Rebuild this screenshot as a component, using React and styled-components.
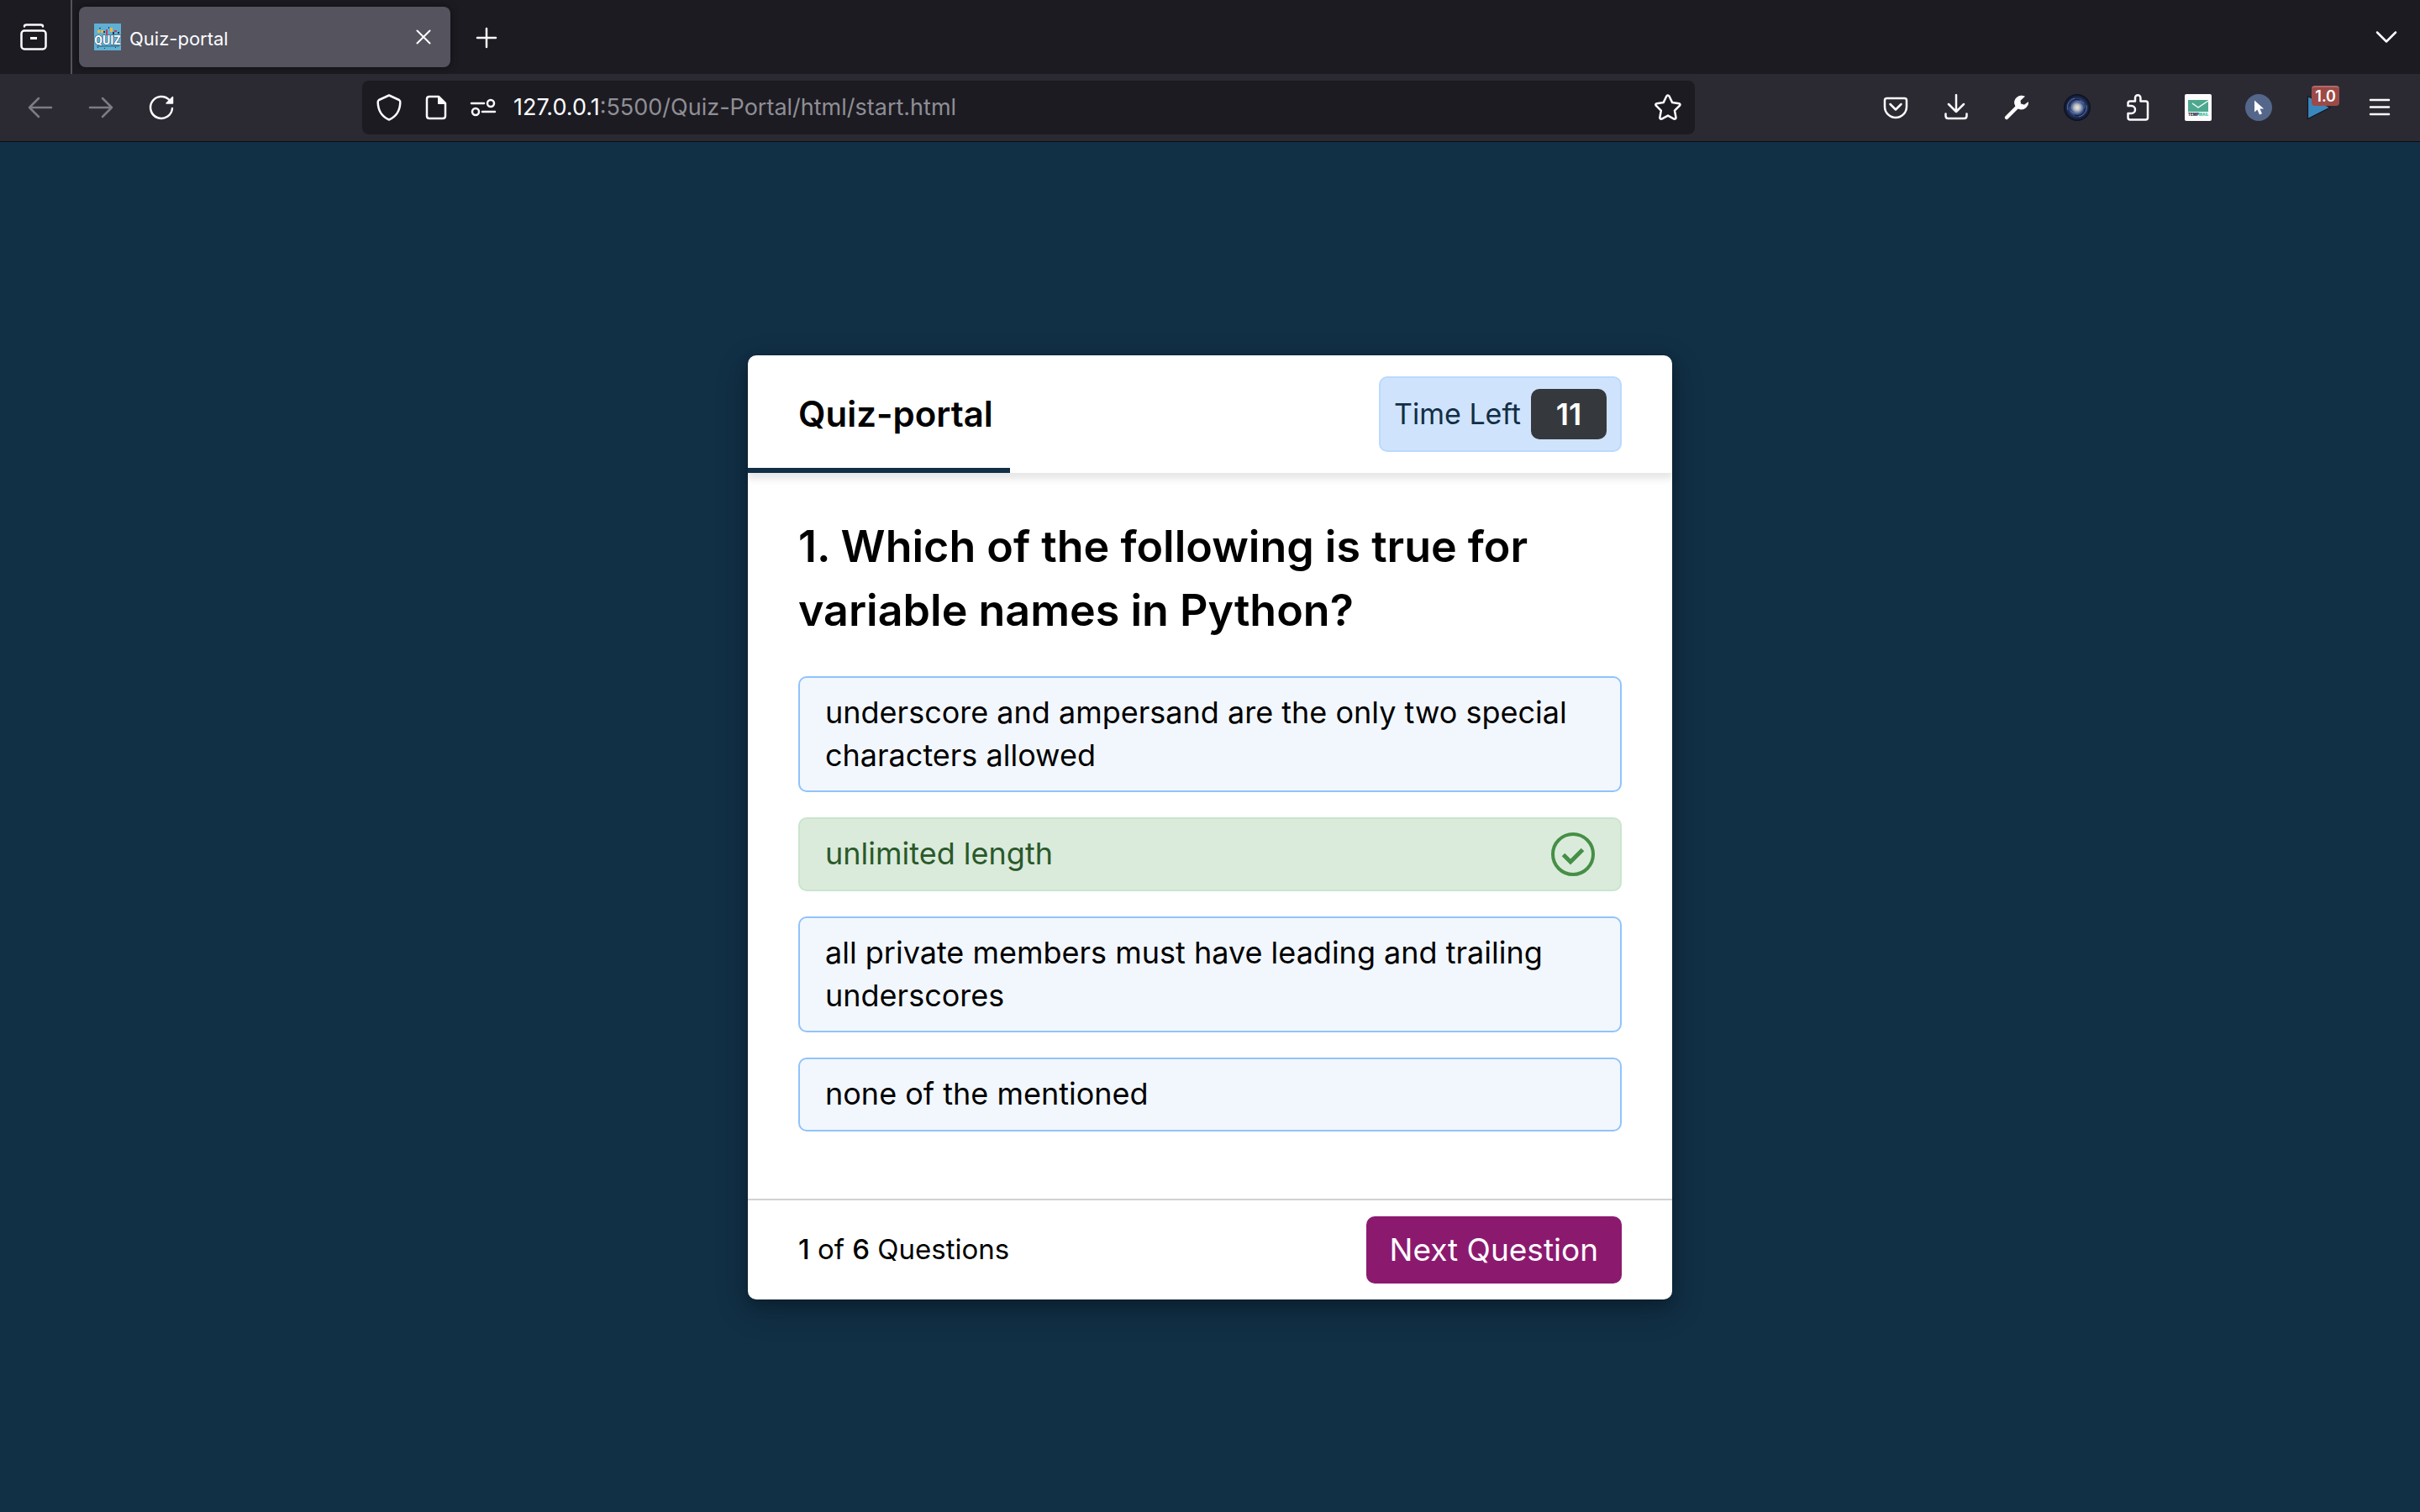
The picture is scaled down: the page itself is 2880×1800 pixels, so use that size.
import React, { useState } from "react";
import styled, { createGlobalStyle, css } from "styled-components";

const uiFont = `Inter, "Liberation Sans", sans-serif`;
const quizFont = `Inter, "Open Sans", sans-serif`;

const GlobalStyle = createGlobalStyle`
  * { box-sizing: border-box; }
  html, body { margin: 0; padding: 0; }
  body { background: #112f45; color: #000; font-family: ${quizFont}; }
  button, input { font: inherit; color: inherit; margin: 0; border: 0; padding: 0; background: none; }
  button { cursor: pointer; }
  svg { display: block; flex: none; }
`;

const Window = styled.div`
  display: flex;
  flex-direction: column;
  min-height: 100vh;
`;

const TabStrip = styled.header`
  display: flex;
  align-items: center;
  height: 88px;
  background: #1c1b22;
  color: #fbfbfe;
  font-family: ${uiFont};
`;

const RecentButton = styled.button`
  display: flex;
  align-items: center;
  justify-content: center;
  align-self: stretch;
  width: 86px;
  padding-right: 4px;
  border-right: 2px solid #54535e;
`;

const Tab = styled.div`
  display: flex;
  align-items: center;
  gap: 10px;
  width: 442px;
  height: 72px;
  margin: 0 8px;
  padding: 0 16px 0 18px;
  border-radius: 8px;
  background: #54535e;
  box-shadow: 0 0 8px rgba(0, 0, 0, 0.5);
`;

const TabTitle = styled.span`
  flex: 1;
  padding-top: 4px;
  font-size: 22px;
  line-height: 32px;
`;

const StripButton = styled.button`
  display: flex;
  align-items: center;
  justify-content: center;
  width: ${(p) => p.$size}px;
  height: ${(p) => p.$size}px;
`;

const StripSpacer = styled.div`
  flex: 1;
`;

const ListTabs = styled(StripButton)`
  margin-right: 4px;
`;

const Toolbar = styled.nav`
  display: flex;
  align-items: center;
  height: 81px;
  padding: 0 12px;
  background: #2b2a33;
  border-bottom: 1px solid #0c0c0d;
  color: #fbfbfe;
  font-family: ${uiFont};
`;

const ToolButton = styled.button`
  position: relative;
  display: flex;
  align-items: center;
  justify-content: center;
  width: 72px;
  height: 64px;
  color: ${(p) => (p.$dim ? "#7d7c82" : "#fbfbfe")};
`;

const Badge = styled.span`
  position: absolute;
  top: 6px;
  right: 12px;
  padding: 0 4px;
  border-radius: 4px;
  border-top: 2px solid #b36a68;
  background: #9c4a48;
  color: #fff;
  font-size: 18px;
  font-weight: 600;
  line-height: 22px;
`;

const AddressBar = styled.div`
  display: flex;
  align-items: center;
  flex: 1;
  height: 64px;
  margin: 0 203px;
  border-radius: 8px;
  padding: 0 4px;
  background: #1c1b22;
  font-size: 27px;
  line-height: 40px;
`;

const AddressButton = styled.button`
  display: flex;
  align-items: center;
  justify-content: center;
  width: 56px;
  height: 56px;
`;

const Host = styled.label`
  padding-left: 8px;
`;

const Path = styled.input`
  flex: 1;
  min-width: 0;
  color: #8f8e94;
  outline: none;
`;

const Page = styled.main`
  display: flex;
  flex: 1;
  align-items: center;
  justify-content: center;
  padding: 40px;
`;

const Card = styled.section`
  width: 1100px;
  max-width: 100%;
  border-radius: 10px;
  background: #fff;
  box-shadow: 0 8px 16px rgba(0, 0, 0, 0.2), 0 12px 40px rgba(0, 0, 0, 0.19);
`;

const CardHeader = styled.header`
  position: relative;
  display: flex;
  align-items: center;
  justify-content: space-between;
  height: 140px;
  padding: 0 60px;
  border-radius: 10px 10px 0 0;
  box-shadow: 0 6px 10px 1px rgba(0, 0, 0, 0.1);
`;

const Title = styled.h1`
  margin: 0;
  font-size: 42px;
  font-weight: 600;
  line-height: 60px;
`;

const Timer = styled.div`
  display: flex;
  align-items: center;
  gap: 12px;
  height: 90px;
  padding: 0 16px;
  border: 2px solid #bbd9fd;
  border-radius: 10px;
  background: #d0e3fd;
`;

const TimerLabel = styled.span`
  color: #112f45;
  font-size: 34px;
  line-height: 51px;
`;

const TimerValue = styled.output`
  width: 90px;
  border-radius: 10px;
  background: #35393d;
  color: #fff;
  font-size: 36px;
  font-weight: 600;
  line-height: 60px;
  text-align: center;
`;

const TimeLine = styled.div`
  position: absolute;
  left: 0;
  bottom: 0;
  height: 6px;
  background: #112f45;
`;

const Body = styled.div`
  padding: 50px 60px 80px;
`;

const Question = styled.h2`
  margin: 0 0 40px;
  font-size: 52px;
  font-weight: 600;
  line-height: 76px;
`;

const OptionList = styled.div`
  display: flex;
  flex-direction: column;
  gap: 30px;
`;

const Option = styled.button`
  display: flex;
  align-items: center;
  justify-content: space-between;
  gap: 16px;
  min-height: 88px;
  padding: 16px 30px;
  border: 2px solid #91c3fb;
  border-radius: 10px;
  background: #f2f7fe;
  font-size: 36px;
  line-height: 51px;
  text-align: left;
  ${(p) =>
    p.$correct &&
    css`
      border-color: #c9e5cd;
      background: #daebdb;
      color: #2a592a;
    `}
`;

const CardFooter = styled.footer`
  display: flex;
  align-items: center;
  justify-content: space-between;
  height: 120px;
  padding: 0 60px;
  border-top: 2px solid #d1d1d1;
`;

const Progress = styled.p`
  margin: 0;
  font-size: 33px;
  line-height: 51px;
  strong { font-weight: 500; }
`;

const NextButton = styled.button`
  height: 80px;
  padding: 0 28px;
  border-radius: 10px;
  background: #8b1a6f;
  color: #fff;
  font-size: 37px;
  line-height: 54px;
`;

const Icon = ({ size = 32, w = 2, children }) => (
  <svg width={size} height={size} viewBox="0 0 32 32" fill="none" stroke="currentColor" strokeWidth={w} strokeLinecap="round" strokeLinejoin="round" aria-hidden="true">
    {children}
  </svg>
);

const Favicon = () => (
  <svg width="32" height="32" viewBox="0 0 32 32" aria-hidden="true">
    <rect width="32" height="32" fill="#5fb0d3" />
    <path d="M4 8h3v3h-3zM8 8h3v3h-3zM19 5h3v5h-3z" fill="#f0b73c" />
    <path d="M14 7h2v7h-2zM24 8h3v2h-3zM28 14h3v4h-3z" fill="#c23a5e" />
    <path d="M6 5h2v1h-2zM17 4h1v2h-1zM22 10h2v3h-2zM11 9h2v2h-2zM28 10h2v2h-2zM1 20h2v2h-2zM4 28h1v1h-1zM25 28h1v1h-1zM12 29h1v1h-1z" fill="#1d3a52" />
    <text x="16" y="25" textAnchor="middle" fontFamily="Roboto, sans-serif" fontWeight="700" fontSize="14" fill="#fff" stroke="#26465e" strokeWidth="1" paintOrder="stroke">QUIZ</text>
    <path d="M3 27h27" stroke="#2c5f7c" strokeWidth="1" />
  </svg>
);

const Galaxy = () => (
  <svg width="32" height="32" viewBox="0 0 32 32" aria-hidden="true">
    <defs>
      <radialGradient id="core">
        <stop offset="0" stopColor="#f0e8da" />
        <stop offset="0.25" stopColor="#b4b6be" />
        <stop offset="0.45" stopColor="#44598a" />
        <stop offset="0.75" stopColor="#1c2a52" />
        <stop offset="1" stopColor="#0a0d18" />
      </radialGradient>
    </defs>
    <circle cx="16" cy="16" r="16" fill="url(#core)" />
    <g fill="none" stroke="#6f8fc9" strokeWidth="1" opacity="0.6">
      <path d="M16 11c6 0 8 5 5 9s-10 4-13 0M16 21c-6 0-8-5-5-9s9-5 13-1M5 19c-2-6 1-12 8-14M27 13c2 6-2 12-9 14" />
    </g>
    <g fill="none" stroke="#080b18" strokeWidth="1" opacity="0.7">
      <path d="M7 15c0-6 6-10 12-8M25 17c0 6-6 10-12 8" />
    </g>
  </svg>
);

const TempMail = () => (
  <svg width="32" height="32" viewBox="0 0 32 32" aria-hidden="true">
    <rect width="32" height="32" rx="2" fill="#fcfcfc" />
    <rect x="4" y="7" width="24" height="14" fill="#4ea890" />
    <path d="M9 11l7 5 12-8" fill="none" stroke="#fff" strokeWidth="1.4" />
    <text x="4" y="26" fontFamily="Inter, sans-serif" fontWeight="900" fontSize="4.4" fill="#26334d">TEMP<tspan fill="#4ec3a0">MAIL</tspan></text>
  </svg>
);

const Pointer = () => (
  <svg width="32" height="32" viewBox="0 0 32 32" aria-hidden="true">
    <circle cx="16" cy="16" r="16" fill="#54678a" />
    <path d="M11 7.500v14l3.400-3 2.600 6 3-1.300-2.600-5.700h4.700z" fill="#fff" />
  </svg>
);

const Play = () => (
  <svg width="32" height="32" viewBox="0 0 32 32" aria-hidden="true">
    <path d="M2.500 2.500v27L29 16z" fill="#3a87bd" stroke="#14171f" strokeWidth="1.200" />
  </svg>
);

const Check = () => (
  <svg width="52" height="52" viewBox="0 0 52 52" fill="none" stroke="#458f46" strokeWidth="4" aria-hidden="true">
    <circle cx="26" cy="26" r="24" />
    <path d="M14.500 26.500l8.500 8.500L37.500 20.500" strokeWidth="5" />
  </svg>
);

const answers = [
  "underscore and ampersand are the only two special characters allowed",
  "unlimited length",
  "all private members must have leading and trailing underscores",
  "none of the mentioned",
];
const correct = 1;
const elapsed = 312 / 1100;

export default function App() {
  const [path, setPath] = useState(":5500/Quiz-Portal/html/start.html");
  return (
    <Window>
      <GlobalStyle />
      <TabStrip>
        <RecentButton aria-label="Recent browsing">
          <Icon w={2.500}>
            <path d="M5 3.500q0-2 2.500-2h17q2.500 0 2.500 2" />
            <rect x="1.500" y="8.500" width="29" height="22" rx="3.500" />
            <path d="M12 17.500h8" strokeLinecap="butt" strokeWidth="3" />
          </Icon>
        </RecentButton>
        <Tab>
          <Favicon />
          <TabTitle>Quiz-portal</TabTitle>
          <StripButton $size={32} aria-label="Close tab">
            <Icon><path d="M8.500 8.500l15 15M23.500 8.500l-15 15" /></Icon>
          </StripButton>
        </Tab>
        <StripButton $size={70} aria-label="New tab">
          <Icon w={2.500}><path d="M16 6v22M5 17h22" /></Icon>
        </StripButton>
        <StripSpacer />
        <ListTabs $size={72} aria-label="List all tabs">
          <Icon w={2.500}><path d="M5 10.500l11 11 11-11" /></Icon>
        </ListTabs>
      </TabStrip>

      <Toolbar>
        <ToolButton $dim aria-label="Back">
          <Icon w={2.500}><path d="M29 16H3M14 5L3 16l11 11" /></Icon>
        </ToolButton>
        <ToolButton $dim aria-label="Forward">
          <Icon w={2.500}><path d="M3 16h26M18 5l11 11-11 11" /></Icon>
        </ToolButton>
        <ToolButton aria-label="Reload">
          <Icon w={2.500}>
            <path d="M29 17A13 13 0 1 1 25.500 7" />
            <path d="M29.500 3.500v7.500h-7.500z" fill="currentColor" strokeWidth="1.500" />
          </Icon>
        </ToolButton>

        <AddressBar>
          <AddressButton aria-label="Tracking protection">
            <Icon w={2.500}><path d="M16 1.500l12 5.500q1.500 1 1.300 3C29 20 24 27 16 30.500 8 27 3 20 2.700 10q-.2-2 1.300-3z" /></Icon>
          </AddressButton>
          <AddressButton aria-label="Site information">
            <Icon w={2.500}>
              <path d="M19 3H8Q5 3 5 6v20q0 3 3 3h16q3 0 3-3V11z" />
              <path d="M18.500 3v8.500H27z" fill="currentColor" strokeWidth="1" />
            </Icon>
          </AddressButton>
          <AddressButton aria-label="Permissions">
            <Icon w={2.500}>
              <path d="M2 11h15M15 21h15" />
              <circle cx="25" cy="11" r="4" />
              <circle cx="7" cy="21" r="4" />
            </Icon>
          </AddressButton>
          <Host htmlFor="address">127.0.0.1</Host>
          <Path id="address" value={path} onChange={(e) => setPath(e.target.value)} />
          <AddressButton aria-label="Bookmark this page">
            <Icon w={2.500}><path d="M14.300 2.500q1.700-2 3.200 0l3.700 7.600 8 1.100q2 .7.800 2.500l-6 6 1.500 8.300q-.1 2-2.300 1.600L16 25.600l-7.400 4q-2.200.4-2.300-1.600l1.500-8.300-6-6q-1.200-1.800.8-2.500l8-1.100z" /></Icon>
          </AddressButton>
        </AddressBar>

        <ToolButton aria-label="Save to Pocket">
          <Icon w={2.500}>
            <path d="M5.500 5h21Q29 5 29 7.500V15a13 13 0 0 1-26 0V7.500Q3 5 5.500 5z" />
            <path d="M9.500 12l6.500 6.500 6.500-6.500" />
          </Icon>
        </ToolButton>
        <ToolButton aria-label="Downloads">
          <Icon w={2.500}><path d="M16 1v20M7 12l9 9 9-9M3.500 23.500V26q0 3 3 3h19q3 0 3-3v-2.500" /></Icon>
        </ToolButton>
        <ToolButton aria-label="Developer tools">
          <Icon>
            <path d="M4 28L17 15" strokeWidth="4.500" />
            <path d="M25 2.800a8 8 0 1 0 4.600 7L25 13.200l-4.500-1.500L20 8z" fill="currentColor" strokeWidth="1" />
          </Icon>
        </ToolButton>
        <ToolButton aria-label="Galaxy theme"><Galaxy /></ToolButton>
        <ToolButton aria-label="Extensions">
          <Icon w={2.500}>
            <path d="M4.500 14v-3q0-2.500 2.500-2.500h6V4.500a3.200 3.200 0 0 1 6.400 0v4h6.100Q28 8.500 28 11v17q0 2.500-2.500 2.500H7q-2.500 0-2.500-2.500v-5h4a4.500 4.500 0 0 0 0-9z" />
          </Icon>
        </ToolButton>
        <ToolButton aria-label="Temp Mail"><TempMail /></ToolButton>
        <ToolButton aria-label="Pointer"><Pointer /></ToolButton>
        <ToolButton aria-label="Playback speed">
          <Play />
          <Badge>1.0</Badge>
        </ToolButton>
        <ToolButton aria-label="Menu">
          <Icon w={2.500}><path d="M5 7h22M5 15.500h22M5 24h22" /></Icon>
        </ToolButton>
      </Toolbar>

      <Page>
        <Card>
          <CardHeader>
            <Title>Quiz-portal</Title>
            <Timer>
              <TimerLabel>Time Left</TimerLabel>
              <TimerValue>11</TimerValue>
            </Timer>
            <TimeLine style={{ width: `${elapsed * 100}%` }} />
          </CardHeader>
          <Body>
            <Question>1. Which of the following is true for variable names in Python?</Question>
            <OptionList>
              {answers.map((answer, i) => (
                <Option key={answer} $correct={i === correct}>
                  <span>{answer}</span>
                  {i === correct && <Check />}
                </Option>
              ))}
            </OptionList>
          </Body>
          <CardFooter>
            <Progress><strong>1</strong> of <strong>6</strong> Questions</Progress>
            <NextButton>Next Question</NextButton>
          </CardFooter>
        </Card>
      </Page>
    </Window>
  );
}
